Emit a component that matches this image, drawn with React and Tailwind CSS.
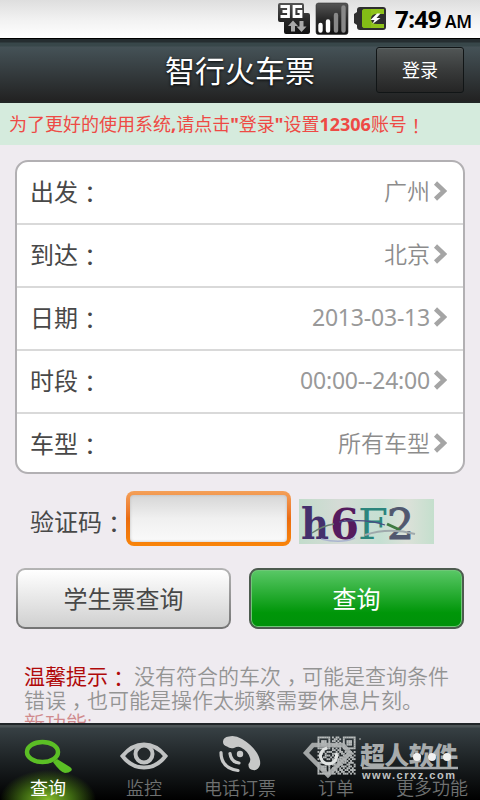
import React from "react";

const rows = [
  { label: "出发", value: "广州" },
  { label: "到达", value: "北京" },
  { label: "日期", value: "2013-03-13", latin: true },
  { label: "时段", value: "00:00--24:00", latin: true },
  { label: "车型", value: "所有车型" },
];

const qr = [
  "111111101011001111111",
  "100000100110101000001",
  "101110101101001011101",
  "101110100010101011101",
  "101110101110001011101",
  "100000100101101000001",
  "111111101010101111111",
  "000000001101100000000",
  "101101110010110101101",
  "011010001101011010010",
  "110011101011001101101",
  "010110010110110010110",
  "101001101001101101011",
  "000000001011010110100",
  "111111100101101101110",
  "100000101101110011001",
  "101110100011011101101",
  "101110101100101011010",
  "101110100110110110111",
  "100000101011011001010",
  "111111101101101110101",
];

// full-width punctuation sits in the middle of its box
function Punct({ children }) {
  return <span className="align-[-2px] leading-none font-['Noto_Sans_CJK_TC',sans-serif]">{children}</span>;
}

function Comma() {
  return <span className="align-[-6px] leading-none font-['Noto_Sans_CJK_TC',sans-serif]">，</span>;
}

function StatusBar() {
  return (
    <div className="flex h-[38px] shrink-0 bg-linear-to-b from-[#dedede] via-[#f1f1f1] to-white">
      <svg className="ml-[277px] h-[38px] w-[112px] shrink-0" viewBox="277 0 112 38">
        <defs>
          <linearGradient id="chip" x1="0" y1="0" x2="0" y2="1">
            <stop offset="0" stopColor="#555" />
            <stop offset="0.5" stopColor="#2a2a2a" />
            <stop offset="1" stopColor="#111" />
          </linearGradient>
        </defs>
        <path d="M280 3h22q2 0 2 2v8h4q2 0 2 2v17q0 2-2 2h-22q-2 0-2-2v-10h-4q-2 0-2-2V5q0-2 2-2z" fill="url(#chip)" />
        <path d="M280.500 6.500h8v10h-8M282.500 11.500h6M302 6.500h-8v10h7v-5h-3.500" fill="none" stroke="#fff" strokeWidth="2.800" />
        <path d="M293 20.500l5 5.500h-3v5.500h-4V26h-3zM301.500 32l-5-5.500h3V21h4v5.500h3z" fill="#aaa" />
        <rect x="316" y="3" width="32" height="31.500" rx="2.500" fill="url(#chip)" stroke="#333" strokeWidth="0.600" />
        <path d="M320.500 25v5.500M328 21.500v9" stroke="#fff" strokeWidth="4.400" strokeLinecap="round" />
        <path d="M336 15v15.500M343.500 7.500v23" stroke="#888" strokeWidth="4.400" strokeLinecap="round" />
        <path d="M360 7h23q3 0 3 3v17q0 3-3 3h-23q-3 0-3-3v-2l-3-2v-9l3-2v-2q0-3 3-3z" fill="#2e2e2e" />
        <path d="M365 9h19v5h-7q-6 0-6 5t6 5h7v4h-19q-3 0-3-3V12q0-3 3-3z" fill="#8fc31b" />
        <path d="M365 9h6v19h-6q-3 0-3-3V12q0-3 3-3z" fill="#83bc16" />
        <path d="M377 13.500l-6.500 6.500h4l-2 4 8-6h-4l4-4.500z" fill="#fff" />
      </svg>
      <div className="flex items-baseline pl-1.5 pt-1 font-bold leading-[30px] text-black">
        <span className="text-[24px] tracking-[-0.5px]">7:49</span>
        <span className="ml-1 text-[17px] font-semibold">AM</span>
      </div>
    </div>
  );
}

function Header() {
  return (
    <div className="flex h-[65px] shrink-0 border-b-2 border-t border-b-[#202525] border-t-black bg-[linear-gradient(#252d30_0,#252d30_3px,#38474a_4px,#38474a_7px,#455257_8px,#222_100%)]">
      <div className="w-[105px]" />
      <h1 className="flex-1 text-center text-[30px] leading-[63px] text-white [text-shadow:0_1px_3px_#000]">
        智行火车票
      </h1>
      <div className="w-[105px] pl-px pt-2">
        <button className="block h-[46px] w-[88px] rounded-[3px] border border-[#111516] bg-linear-to-b from-[#515656] via-[#393b3b] to-[#252525] text-[18px] text-white shadow-[inset_0_1px_0_#5d6363]">
          登录
        </button>
      </div>
    </div>
  );
}

function Chevron() {
  return (
    <svg className="ml-[3px] h-5 w-[14px]" viewBox="0 0 14 20">
      <path d="M2.500 2l8.500 8-8.500 8" fill="none" stroke="#a5a5a5" strokeWidth="4.500" />
    </svg>
  );
}

function SearchCard() {
  return (
    <div className="mx-[15px] mt-[15px] h-[314px] shrink-0 rounded-[13px] border-2 border-[#b2b0b3] bg-white">
      {rows.map((r) => (
        <div
          key={r.label}
          className="flex h-[63px] items-start border-b-2 border-[#d9d9d9] pl-[13px] pr-4 pt-[13px] leading-8 last:h-[58px] last:border-0"
        >
          <span className="flex-1 pt-px text-[24px] leading-8 text-[#484848]">
            {r.label}
            <Punct>：</Punct>
          </span>
          <span
            className={
              r.latin
                ? "text-[23px] tracking-[-0.2px] text-[#999]"
                : "text-[23px] font-[350] text-[#8c8c8c]"
            }
          >
            {r.value}
          </span>
          <span className="flex h-8 items-center">
            <Chevron />
          </span>
        </div>
      ))}
    </div>
  );
}

function Captcha() {
  return (
    <svg className="ml-2 mt-2 h-[45px] w-[135px]" viewBox="0 0 135 45">
      <defs>
        <linearGradient id="cap">
          <stop offset="0" stopColor="#c2dccb" />
          <stop offset="0.300" stopColor="#d5dbd6" />
          <stop offset="0.600" stopColor="#c5dfd2" />
          <stop offset="0.800" stopColor="#dce1d9" />
          <stop offset="1" stopColor="#c4dfcd" />
        </linearGradient>
      </defs>
      <rect width="135" height="45" fill="url(#cap)" />
      <g fontFamily="DejaVu Serif" fontSize="43">
        <text x="2" y="40" fontWeight="bold" fill="#44306c" textLength="28" lengthAdjust="spacingAndGlyphs">h</text>
        <text x="31" y="40" fontWeight="bold" fill="#551b5e" textLength="29" lengthAdjust="spacingAndGlyphs">6</text>
        <text x="59" y="40" fill="#2b857c" textLength="30" lengthAdjust="spacingAndGlyphs">F</text>
        <text x="88" y="40" fill="#51586f" stroke="#51586f" textLength="27" lengthAdjust="spacingAndGlyphs">2</text>
      </g>
      <path d="M13 34q10-7 22-9" fill="none" stroke="#68806f" strokeWidth="1.300" />
      <path d="M40 23q26-4 46 3" fill="none" stroke="#4a4b83" strokeWidth="1.200" />
      <path d="M88 25l13 6" stroke="#3f7a43" strokeWidth="3" />
      <path d="M66 36q24-8 50-1" fill="none" stroke="#9fa9ac" strokeWidth="2" />
      <path d="M22 40q20 5 34-1" fill="none" stroke="#aab4cf" strokeWidth="1.500" />
    </svg>
  );
}

function NavItem({ label, active, children }) {
  return (
    <div
      className={
        active
          ? "flex-1 bg-[radial-gradient(ellipse_50%_40%_at_50%_100%,#86bd2c_0%,#3e6812_50%,transparent_100%)] text-center text-white"
          : "flex-1 text-center font-[350] text-[#6f7171]"
      }
    >
      <svg className="mx-auto h-[51px] w-24" viewBox="0 0 96 51">
        {children}
      </svg>
      <div className="text-[18px] leading-6">{label}</div>
    </div>
  );
}

function Watermark() {
  return (
    <svg className="absolute left-[300px] top-[10px] h-[52px] w-[165px]" viewBox="300 735 165 52">
      <g fill="#b8bcbc" transform="translate(317.500 736.500) scale(1.810)">
        {qr.map((line, y) =>
          [...line].map((c, x) => c === "1" && <rect key={x + "-" + y} x={x} y={y} width="1.050" height="1.050" />)
        )}
      </g>
      <path d="M313 745h30l7 8-22 22-22-22z" fill="none" stroke="#b0b4b4" strokeWidth="4.500" opacity="0.900" />
      <path d="M327 748a8 8 0 1 0 9 5" fill="none" stroke="#e1e4e3" strokeWidth="3" />
      <circle cx="360" cy="739" r="1" fill="#8a8e8e" />
      <text x="360" y="765" fontSize="25" fontWeight="900" fill="#a7abac" textLength="98" fontFamily="Noto Sans CJK SC">
        超人软件
      </text>
      <path d="M362 768h96" stroke="#a7abac" strokeWidth="2.500" />
      <g fill="#f1f1f1">
        <circle cx="417" cy="757" r="4" />
        <circle cx="432" cy="757" r="4" />
        <circle cx="447" cy="757" r="4" />
      </g>
      <text x="362" y="779" fontSize="11" fontWeight="bold" fill="#c0c3c3" textLength="93" fontFamily="Liberation Sans">
        www.crxz.com
      </text>
    </svg>
  );
}

export default function App() {
  return (
    <div className="flex h-[800px] w-[480px] flex-col overflow-hidden bg-[#efebf0] font-['Noto_Sans','Noto_Sans_CJK_SC',sans-serif]">
      <StatusBar />
      <Header />
      <div className="h-[42px] shrink-0 whitespace-nowrap bg-[#d5ebdd] pl-[9px] text-[18px] leading-[43px] text-[#ee4a45]">
        为了更好的使用系统<b>,</b>请点击<b>"</b>登录<b>"</b>设置<b>12306</b>账号<Punct>！</Punct>
      </div>

      <SearchCard />

      <div className="mt-[17px] flex h-[55px] shrink-0 pl-[30px]">
        <label className="w-24 whitespace-nowrap pt-px text-[24px] leading-[59px] text-[#484848]">
          验证码<Punct>：</Punct>
        </label>
        <div className="h-[55px] w-[165px] rounded-[8px] bg-linear-to-b from-[#f4a058] via-[#ea6c10] to-[#f98409] p-1">
          <input className="block h-[47px] w-full rounded-[4px] bg-linear-to-b from-[#d6d6d6] via-[#f0f0f0] to-[#fafafa] shadow-[inset_0_0_3px_#bbb] outline-none" />
        </div>
        <Captcha />
      </div>

      <div className="mt-[22px] flex h-[61px] shrink-0 gap-[18px] px-4 text-[24px]">
        <div className="flex-1 rounded-[9px] bg-linear-to-b from-[#b4b4b4] to-[#747474] p-0.5">
          <button className="h-full w-full rounded-[7px] bg-linear-to-b from-white to-[#d0d0d0] text-[#484848]">
            学生票查询
          </button>
        </div>
        <button className="flex-1 rounded-[9px] border-2 border-[#4d5b4f] bg-[linear-gradient(#5ac867,#009609_75%,#00910a)] text-white shadow-[inset_0_0_0_1px_#6fc877]">
          查询
        </button>
      </div>

      <div className="mt-[35px] h-[59px] shrink-0 overflow-hidden whitespace-nowrap pl-6 text-[21px] font-[350] leading-[24px] text-[#949494]">
        <p className="h-6">
          <span className="font-normal text-[#b00a0a]">
            温馨提示<Punct>：</Punct>
          </span>
          <span className="ml-[5px]">
            没有符合的车次<Comma />可能是查询条件
          </span>
        </p>
        <p className="h-6">
          错误<Comma />也可能是操作太频繁需要休息片刻。
        </p>
        <p className="-mt-px h-6 text-[#d08a8d]">新功能:</p>
      </div>

      <nav className="relative flex h-[77px] shrink-0 border-t-2 border-[#202528] bg-[linear-gradient(#4c5456_0,#4c5456_2px,#374044_3px,#1b2022_50%,#000_100%)]">
        <NavItem label="查询" active>
          <ellipse cx="42.500" cy="27" rx="15.500" ry="10" fill="none" stroke="#5bbf25" strokeWidth="4.500" />
          <path d="M53 37l4-3 13 8q3 2 1 4t-6 2q-5-1-12-11z" fill="#5bbf25" />
        </NavItem>
        <NavItem label="监控">
          <path d="M26.500 31Q36 19.500 48 19.500T69.500 31Q61 42.500 48 42.500T26.500 31z" fill="none" stroke="#c0c2c2" strokeWidth="4" />
          <circle cx="48" cy="29" r="8.500" fill="#24292b" stroke="#c0c2c2" strokeWidth="4" />
        </NavItem>
        <NavItem label="电话订票">
          <path d="M31 17Q31 12 37 11.500Q43 10 50 14Q60 20 65 28Q69 35 68 40Q66 46 61 45Q56 44 56.500 39Q59 36 58 33Q56 26 49 22.500Q46 21 42 23Q38 24 35 21.500Q31 20 31 17z" fill="#c7c8c8" />
          <circle cx="48" cy="29" r="3.200" fill="#c7c8c8" />
          <path d="M38 28.500Q39 37 47 38M29 27.500Q29 43 46 45.500" fill="none" stroke="#c7c8c8" strokeWidth="3.200" strokeLinecap="round" />
        </NavItem>
        <NavItem label="订单" />
        <NavItem label="更多功能" />
        <Watermark />
      </nav>
    </div>
  );
}
